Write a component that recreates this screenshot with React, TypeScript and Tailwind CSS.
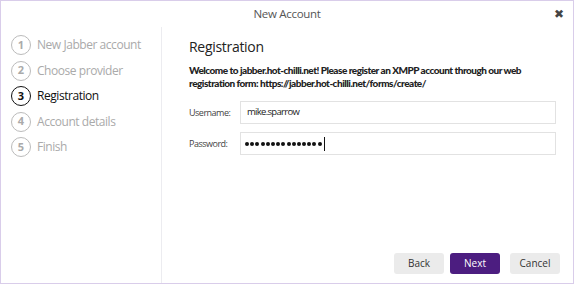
const steps = ['New Jabber account', 'Choose provider', 'Registration', 'Account details', 'Finish'];

export default function App() {
    return (
        <div className="w-[574px] h-[284px] bg-white border border-[#d9cdea] flex flex-col font-['Open_Sans',sans-serif] overflow-hidden">
            {/* Title bar */}
            <div className="h-[26px] flex items-center justify-center relative shrink-0">
                <span className="text-[11.5px] text-[#555] tracking-[-0.3px]">New Account</span>
                <span className="absolute right-[9px] top-[4px] text-[12px] text-[#444]">✖</span>
            </div>

            <div className="flex flex-1 min-h-0">
                {/* Steps sidebar */}
                <div className="w-[161px] border-r border-[#ececf0] flex flex-col gap-[5.5px] pl-[10px] pt-[8px] shrink-0">
                    {steps.map((s, i) => {
                        const active = i === 2;
                        return (
                            <div key={s} className="flex items-center gap-[6px] h-[20px]">
                                <div
                                    className={
                                        active
                                            ? 'w-[20px] h-[20px] rounded-full border-[1.5px] border-[#111] flex items-center justify-center text-[11px] font-bold text-[#111]'
                                            : 'w-[20px] h-[20px] rounded-full border-[1.5px] border-[#bbb] flex items-center justify-center text-[11px] font-bold text-[#aaa]'
                                    }
                                >
                                    {i + 1}
                                </div>
                                <span className={active ? 'text-[12px] text-[#111] tracking-[-0.45px]' : 'text-[12px] text-[#aaa] tracking-[-0.45px]'}>
                                    {s}
                                </span>
                            </div>
                        );
                    })}
                </div>

                {/* Main pane */}
                <div className="flex-1 min-w-0 flex flex-col pl-[27px] pr-[17px] pt-[9px] pb-[9px]">
                    <h1 className="text-[14px] text-[#222] tracking-[-0.3px] leading-[22px]">Registration</h1>
                    <p className="mt-[6px] font-['Lato',sans-serif] text-[10px] font-black text-[#222] leading-[13px] tracking-[-0.5px] whitespace-nowrap">
                        Welcome to jabber.hot-chilli.net! Please register an XMPP account through our web
                        <br />
                        registration form: https://jabber.hot-chilli.net/forms/create/
                    </p>

                    <div className="mt-[11px] flex flex-col gap-[8px]">
                        <div className="flex items-center">
                            <span className="w-[51px] text-[9px] text-[#444] tracking-[-0.5px]">Username:</span>
                            <div className="flex-1 h-[23px] border border-[#e2e2e2] flex items-center px-[6px] text-[9.5px] text-[#222] tracking-[-0.7px]">
                                mike.sparrow
                            </div>
                        </div>
                        <div className="flex items-center">
                            <span className="w-[51px] text-[9px] text-[#444] tracking-[-0.5px]">Password:</span>
                            <div className="flex-1 h-[23px] border border-[#e2e2e2] flex items-center gap-[1.2px] px-[4px]">
                                {Array.from({ length: 15 }).map((_, i) => (
                                    <span key={i} className="w-[4px] h-[4px] rounded-full bg-[#111]" />
                                ))}
                                <span className="ml-[1px] w-px h-[14px] bg-[#111]" />
                            </div>
                        </div>
                    </div>

                    <div className="mt-auto flex justify-end gap-[6px] mr-[-4px]">
                        <button className="w-[50px] h-[21px] rounded-[3px] bg-[#ebebeb] text-[10px] text-[#333]">Back</button>
                        <button className="w-[50px] h-[21px] rounded-[3px] bg-[#4c1d80] text-[10px] text-white">Next</button>
                        <button className="w-[50px] h-[21px] rounded-[3px] bg-[#ebebeb] text-[10px] text-[#333] ml-[4px]">Cancel</button>
                    </div>
                </div>
            </div>
        </div>
    );
}
